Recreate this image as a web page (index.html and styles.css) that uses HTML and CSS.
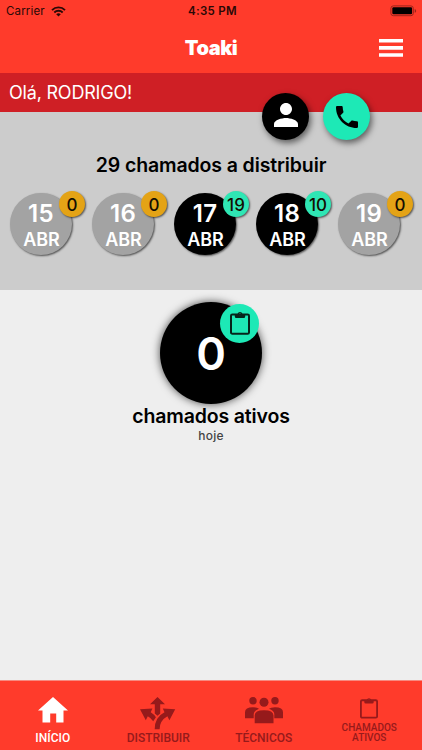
FILE: index.html
```html
<!DOCTYPE html>
<html lang="pt-BR">
<head>
    <meta charset="UTF-8">
    <meta name="viewport" content="width=device-width, initial-scale=1.0">
    <title>Toaki</title>
    <link rel="stylesheet" href="styles.css">
</head>
<body>
    <!-- Cabeçalho -->
    <header class="header">
        <div class="status">
            <div class="status-left">
                <span class="carrier">Carrier</span>
                <svg class="wifi" viewBox="0 0 15 11" width="15" height="11">
                    <path d="M1 4.1a9.2 9.2 0 0 1 13 0M3.3 6.5a6 6 0 0 1 8.4 0" fill="none" stroke="#2a0906" stroke-width="1.9"/>
                    <path d="M5.2 8.3a3.3 3.3 0 0 1 4.6 0L7.5 10.6z" fill="#2a0906"/>
                </svg>
            </div>
            <span class="clock">4:35 PM</span>
            <svg class="battery" viewBox="0 0 27 12" width="27" height="12">
                <rect x=".9" y=".9" width="22.4" height="9.8" rx="2.4" fill="none" stroke="#9c241b" stroke-width="1"/>
                <rect x="2.3" y="2.3" width="19.8" height="7" rx="1.2" fill="#000"/>
                <path d="M24.7 4v3.8q1.5-.6 1.5-1.9T24.7 4z" fill="#9c241b"/>
            </svg>
        </div>
        <div class="navbar">
            <h1>Toaki</h1>
            <svg class="menu" viewBox="0 0 24 18" width="24" height="18">
                <path d="M0 0h24v3.6H0zM0 7.1h24v3.6H0zM0 14.2h24v3.6H0z" fill="#fff"/>
            </svg>
        </div>
    </header>

    <div class="greeting">
        <span>Olá, RODRIGO!</span>
        <div class="actions">
            <div class="action action-user">
                <svg viewBox="4 4 16 16" width="24" height="24"><path d="M12 12c2.21 0 4-1.79 4-4s-1.79-4-4-4-4 1.79-4 4 1.79 4 4 4zm0 2c-2.67 0-8 1.34-8 4v2h16v-2c0-2.66-5.33-4-8-4z" fill="#fff"/></svg>
            </div>
            <div class="action action-phone">
                <svg viewBox="3 3 18 18" width="22" height="22"><path d="M6.62 10.79c1.44 2.83 3.76 5.14 6.59 6.59l2.2-2.2c.27-.27.67-.36 1.02-.24 1.12.37 2.33.57 3.57.57.55 0 1 .45 1 1V20c0 .55-.45 1-1 1-9.39 0-17-7.61-17-17 0-.55.45-1 1-1h3.5c.55 0 1 .45 1 1 0 1.25.2 2.45.57 3.57.11.35.03.74-.25 1.02l-2.2 2.2z" fill="#000"/></svg>
            </div>
        </div>
    </div>

    <!-- Chamados por dia -->
    <section class="days-panel">
        <h2>29 chamados a distribuir</h2>
        <div class="days">
            <div class="day"><span class="num">15</span><span class="month">ABR</span><span class="badge">0</span></div>
            <div class="day"><span class="num">16</span><span class="month">ABR</span><span class="badge">0</span></div>
            <div class="day active"><span class="num">17</span><span class="month">ABR</span><span class="badge">19</span></div>
            <div class="day active"><span class="num">18</span><span class="month">ABR</span><span class="badge">10</span></div>
            <div class="day"><span class="num">19</span><span class="month">ABR</span><span class="badge">0</span></div>
        </div>
    </section>

    <!-- Chamados ativos -->
    <main class="content">
        <div class="total">
            <span>0</span>
            <div class="total-icon">
                <svg viewBox="0 0 20 24" width="20" height="24">
                    <rect x="1" y="3.4" width="18" height="19.4" rx="1.4" fill="none" stroke="#06251b" stroke-width="2"/>
                    <path d="M4.8 3h2.700a2.600 2.600 0 0 1 5 0h2.700v2.500q0 1.500-1.500 1.500H6.300q-1.500 0-1.500-1.500zM10 2.200a1 1 0 1 0 0 2 1 1 0 1 0 0-2z" fill="#06251b" fill-rule="evenodd"/>
                </svg>
            </div>
        </div>
        <h3>chamados ativos</h3>
        <p>hoje</p>
    </main>

    <!-- Menu inferior -->
    <nav class="tabs">
        <div class="tab selected">
            <svg viewBox="0 0 30 26" width="30" height="26"><path d="M15 0L30 13.5H25.5V25.6H18.2V16.5H12.2V25.6H4.5V13.5H0z" fill="#fff"/></svg>
            <span>INÍCIO</span>
        </div>
        <div class="tab">
            <svg viewBox="0 0 36 33" width="36" height="33">
                <g fill="#961a1b">
                    <path d="M17.5 0L25 7.2H20.2V16.5L17.5 18.8 14.8 16.500V7.200H10z"/>
                    <path d="M0 12.200L12.400 11.500 10.700 15.300Q14 17.300 15.900 20.300L13.200 24.300Q11 21 7.800 19.300L5.800 23.200z"/>
                    <path d="M35.200 12.200L22.800 11.500 24.500 15.300Q14.700 20.300 14.700 32.200H19.600Q19.600 23.700 27.400 19.300L29.400 23.200z"/>
                </g>
            </svg>
            <span>DISTRIBUIR</span>
        </div>
        <div class="tab">
            <svg viewBox="0 0 38 27" width="38" height="27">
                <g fill="#961a1b">
                    <circle cx="8" cy="3.8" r="3.7"/>
                    <circle cx="30" cy="3.8" r="3.7"/>
                    <circle cx="19" cy="5.2" r="4.5"/>
                    <path d="M0 21.3V15.3Q0 10.2 8 10.2 12.2 10.2 14 11.7 9 13.4 8.7 17V21.3zM38 21.3V15.3Q38 10.2 30 10.2 25.8 10.2 24 11.7 29 13.4 29.3 17V21.3z"/>
                    <path d="M9.7 26.3V18.5Q9.7 13.2 19 13.2T28.5 18.5V26.3z"/>
                </g>
            </svg>
            <span>TÉCNICOS</span>
        </div>
        <div class="tab small">
            <svg viewBox="0 0 20 24" width="18" height="22">
                <rect x="1" y="3.4" width="18" height="19.4" rx="1.4" fill="none" stroke="#961a1b" stroke-width="2"/>
                <path d="M4.8 3h2.700a2.600 2.600 0 0 1 5 0h2.700v2.500q0 1.500-1.500 1.500H6.300q-1.500 0-1.500-1.500zM10 2.200a1 1 0 1 0 0 2 1 1 0 1 0 0-2z" fill="#961a1b" fill-rule="evenodd"/>
            </svg>
            <span>CHAMADOS<br>ATIVOS</span>
        </div>
    </nav>
</body>
</html>
```

FILE: styles.css
```css
* {
    box-sizing: border-box;
}
body {
    margin: 0;
    height: 750px;
    display: flex;
    flex-direction: column;
    background-color: #eee;
    font-family: Inter, "Liberation Sans", sans-serif;
    overflow: hidden;
}
h1, h2, h3, p {
    margin: 0;
}
svg {
    display: block;
    flex: none;
}
.header {
    height: 73px;
    background-color: #ff3b2b;
}
.status {
    height: 22px;
    padding: 0 6px;
    display: grid;
    grid-template-columns: 1fr auto 1fr;
    align-items: center;
    font-size: 11.5px;
    color: #2a0906;
}
.status-left {
    display: flex;
    align-items: center;
    gap: 6px;
}
.carrier {
    letter-spacing: 0.15px;
}
.clock {
    padding-left: 3px;
    font-weight: 600;
    letter-spacing: 0.3px;
}
.battery {
    justify-self: end;
    margin-right: -1px;
}
.navbar {
    height: 51px;
    padding: 0 19px;
    display: grid;
    grid-template-columns: 1fr auto 1fr;
    align-items: center;
}
.navbar h1 {
    grid-column: 2;
    font-size: 20px;
    line-height: 24px;
    font-weight: 900;
    letter-spacing: -0.5px;
    color: #fff;
}
.menu {
    justify-self: end;
}
.greeting {
    position: relative;
    height: 39px;
    padding-left: 9px;
    line-height: 39px;
    background-color: #cf1f25;
    color: #fff;
    font-size: 18px;
    letter-spacing: -0.2px;
}
.actions {
    position: absolute;
    top: 20px;
    right: 52px;
    display: flex;
    gap: 14px;
}
.action {
    width: 47px;
    height: 47px;
    border-radius: 50%;
    display: flex;
    align-items: center;
    justify-content: center;
    box-shadow: 2px 3px 6px rgba(0, 0, 0, 0.55);
}
.action-user {
    background-color: #000;
    padding-bottom: 4px;
}
.action-phone {
    background-color: #1de9b6;
}
.days-panel {
    height: 178px;
    padding-top: 40px;
    background-color: #ccc;
}
.days-panel h2 {
    font-size: 19.5px;
    line-height: 26px;
    font-weight: 600;
    letter-spacing: -0.12px;
    text-align: center;
    white-space: nowrap;
}
.days {
    display: flex;
    justify-content: space-between;
    padding: 15px 22px 0 10px;
}
.day {
    position: relative;
    width: 62px;
    height: 62px;
    border-radius: 50%;
    display: flex;
    flex-direction: column;
    align-items: center;
    background-color: #a3a3a3;
    box-shadow: 1px 1px 2px rgba(0, 0, 0, 0.6);
    color: #fff;
}
.day.active {
    background-color: #000;
}
.num {
    padding-top: 8px;
    font-size: 24px;
    line-height: 26px;
    font-weight: 600;
    letter-spacing: 0.3px;
}
.month {
    padding-left: 1px;
    font-size: 18px;
    line-height: 25px;
    font-weight: 600;
}
.badge {
    position: absolute;
    top: -2px;
    left: 49px;
    width: 26px;
    height: 26px;
    border-radius: 50%;
    background-color: #e4a316;
    box-shadow: 1px 1px 2px rgba(0, 0, 0, 0.6);
    color: #140e02;
    font-size: 17px;
    line-height: 28px;
    font-weight: 500;
    text-align: center;
}
.active .badge {
    background-color: #2fe6b4;
}
.content {
    flex: 1;
    padding-top: 12px;
    display: flex;
    flex-direction: column;
    align-items: center;
}
.total {
    position: relative;
    width: 102px;
    height: 102px;
    border-radius: 50%;
    background-color: #000;
    box-shadow: 0 0 9px rgba(0, 0, 0, 0.7);
    color: #fff;
    font-size: 45px;
    line-height: 103px;
    font-weight: 600;
    text-align: center;
}
.total-icon {
    position: absolute;
    top: 2px;
    right: 3px;
    width: 39px;
    height: 39px;
    border-radius: 50%;
    display: flex;
    align-items: center;
    justify-content: center;
    padding-bottom: 2px;
    background-color: #1de9b6;
}
.content h3 {
    font-size: 19.5px;
    line-height: 25px;
    font-weight: 600;
    letter-spacing: -0.15px;
}
.content p {
    font-size: 12px;
    line-height: 14px;
    font-weight: 500;
    letter-spacing: 0.2px;
    color: #444;
}
.tabs {
    height: 70px;
    display: grid;
    grid-template-columns: repeat(4, 1fr);
    border-top: 1px solid #f78a80;
    background-color: #ff3b2b;
    font-family: Roboto, sans-serif;
}
.tab {
    display: flex;
    flex-direction: column;
    align-items: center;
    justify-content: space-between;
    padding: 16px 0 5px;
    color: #961a1b;
    font-size: 12px;
    line-height: 14px;
    font-weight: 500;
    text-align: center;
}
.tab.selected {
    color: #fff;
}
.tab.small {
    padding-bottom: 7px;
    font-size: 10px;
    line-height: 10px;
}
```
